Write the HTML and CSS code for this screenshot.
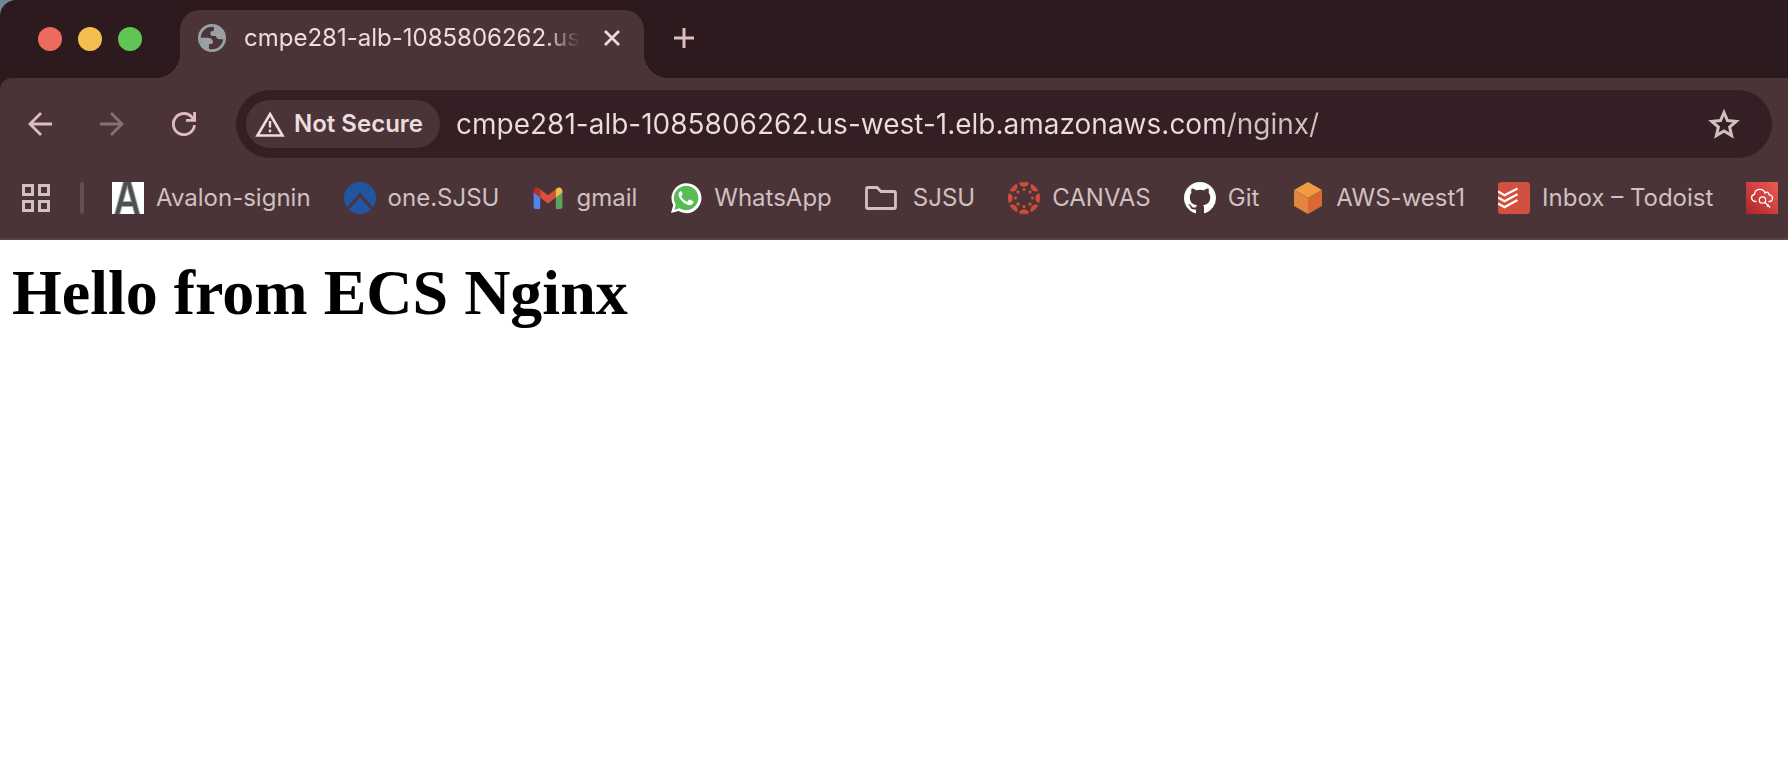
FILE: index.html
```
<!DOCTYPE html>
<html lang="en">
<head>
<meta charset="utf-8">
<meta name="viewport" content="width=device-width, initial-scale=1">
<title>cmpe281-alb-1085806262.us-west-1.elb.amazonaws.com/nginx/</title>
<link rel="stylesheet" href="styles.css">
</head>
<body>
<div class="window">
  <header class="tab-strip">
    <div class="window-controls">
      <button class="light light-close" aria-label="Close window"></button>
      <button class="light light-minimize" aria-label="Minimize window"></button>
      <button class="light light-zoom" aria-label="Zoom window"></button>
    </div>
    <div class="tab">
      <svg class="tab-icon" viewBox="0 0 28 28" aria-hidden="true"><circle cx="14" cy="14" r="14" fill="#9aa0a4"/><circle cx="14" cy="14" r="11.200" fill="#4b3438"/><path d="M2 13.700h7.500c3.500 0 5.500 1.600 5.500 4.300 0 1.500-1 2-2.300 2H11v5.500L5 23zM16 2v3.500c-.3 1.600-1.500 2-3.500 2v2.800c0 1.200.7 1.700 2 1.700h3.200c1 2.500 2 3.200 4.500 3.200h4.300L25 7z" fill="#9aa0a4"/></svg>
      <span class="tab-title">cmpe281-alb-1085806262.us-west-1.elb.amazonaws.com/nginx/</span>
      <button class="tab-close" aria-label="Close tab"><svg viewBox="0 0 16 16" width="16" height="16"><path d="M1 1l14 14M15 1L1 15" stroke="currentColor" stroke-width="2.800"/></svg></button>
    </div>
    <button class="new-tab" aria-label="New tab"><svg viewBox="0 0 20 20" width="20" height="20"><path d="M10 0v20M0 10h20" stroke="currentColor" stroke-width="3"/></svg></button>
  </header>

  <div class="toolbar">
    <nav class="nav-buttons" aria-label="History">
      <button class="nav-button" aria-label="Back"><svg viewBox="0 0 24 24"><path d="M24 12H2M13 1L2 12l11 11" fill="none" stroke="currentColor" stroke-width="2.800"/></svg></button>
      <button class="nav-button nav-disabled" aria-label="Forward"><svg viewBox="0 0 24 24"><path d="M0 12h22M11 1l11 11-11 11" fill="none" stroke="currentColor" stroke-width="2.800"/></svg></button>
      <button class="nav-button" aria-label="Reload"><svg viewBox="0 0 24 24"><path d="M22.500 13.200A10.600 10.600 0 1 1 20.500 5.800L22 8M22.600 0v8.400H14" fill="none" stroke="currentColor" stroke-width="2.800"/></svg></button>
    </nav>
    <div class="address-bar">
      <button class="site-chip"><svg class="chip-icon" viewBox="0 0 30 26" aria-hidden="true"><path d="M15 3L27.500 24.500h-25z" fill="none" stroke="currentColor" stroke-width="2.600"/><path d="M15 10v6.500M15 18.500v2.700" stroke="currentColor" stroke-width="2.400"/></svg>Not Secure</button>
      <input class="url" type="text" aria-label="Address" spellcheck="false" value="cmpe281-alb-1085806262.us-west-1.elb.amazonaws.com/nginx/">
      <button class="bookmark-star" aria-label="Bookmark this page"><svg viewBox="0 0 32 30" width="32" height="30"><path d="M16 3.500l3.500 8 8.700.8-6.600 5.700 2 8.600L16 22l-7.600 4.600 2-8.600-6.600-5.700 8.700-.8z" fill="none" stroke="currentColor" stroke-width="3"/></svg></button>
    </div>
  </div>

  <nav class="bookmarks" aria-label="Bookmarks">
    <button class="apps" aria-label="Apps"><svg viewBox="0 0 28 28" width="28" height="28"><path d="M1.500 1.500h9v9h-9zM17.500 1.500h9v9h-9zM1.500 17.500h9v9h-9zM17.500 17.500h9v9h-9z" fill="none" stroke="currentColor" stroke-width="3"/></svg></button>
    <span class="divider"></span>
    <ul class="bookmark-list">
      <li><a class="bookmark" href="#"><svg class="favicon" viewBox="0 0 32 32" aria-hidden="true"><path d="M0 0h32v32H0z" fill="#fff"/><path d="M5 33L14 0h2.500L25.500 33M8 22h14" fill="none" stroke="#a5a9a9" stroke-width="6"/><path d="M5 33L14 0h2.500L25.500 33M8 22h14" fill="none" stroke="#4b5152" stroke-width="4"/></svg>Avalon-signin</a></li>
      <li><a class="bookmark" href="#"><svg class="favicon" viewBox="0 0 32 32" aria-hidden="true"><circle cx="16" cy="16" r="16" fill="#2155a2"/><path d="M4 26.500L16 13l12 13.500" fill="none" stroke="#4b3438" stroke-width="3"/></svg>one.SJSU</a></li>
      <li><a class="bookmark" href="#"><svg class="favicon" viewBox="0 0 32 32" aria-hidden="true"><path d="M1.600 10v15c0 1.100.9 2 2 2h4.600V14z" fill="#5085ed"/><path d="M23.800 14v13h4.600c1.100 0 2-.9 2-2V10z" fill="#58a55c"/><path d="M8.200 7.200L16 13.200l7.800-6v8.200L16 21.400l-7.800-6z" fill="#d85140"/><path d="M8.200 15.400V7.200C5.500 4 1.600 5.500 1.600 8.800v1.800z" fill="#b33226"/><path d="M23.800 15.400V7.200c2.700-3.200 6.600-1.700 6.600 1.600v1.800z" fill="#f1bd42"/></svg>gmail</a></li>
      <li><a class="bookmark" href="#"><svg class="favicon" viewBox="0 0 32 32" aria-hidden="true"><path d="M1 31l2.200-7.800A15 15 0 1 1 8.700 29z" fill="#fff"/><path d="M4.400 27.700l1.400-5.200A12.200 12.200 0 1 1 9.600 26.300z" fill="#57bd53"/><path d="M11.300 9.200c-.5-.1-1 0-1.400.4-1 1-1.500 2.200-1.300 3.600.4 2.600 2.700 5.500 5.200 7.500 2.300 1.800 5.100 2.900 7.100 2.300 1.600-.5 2.700-1.600 2.600-3.200 0-.4-.3-.6-.7-.8l-3-1.400c-.5-.2-.8-.1-1.100.3l-1.200 1.500c-.3.300-.6.300-1 .1-2.300-1-4-2.600-5.100-4.700-.2-.4-.1-.7.200-1l.9-1.200c.2-.3.200-.5.100-.9l-1.300-2.500z" fill="#fff"/></svg>WhatsApp</a></li>
      <li><a class="bookmark bookmark-folder" href="#"><svg class="favicon" viewBox="0 0 32 32" aria-hidden="true"><path d="M1.500 7q0-1.500 1.500-1.500h9l4 4h13q1.500 0 1.500 1.500v14q0 1.500-1.500 1.500H3q-1.500 0-1.500-1.500z" fill="none" stroke="#cfc0c2" stroke-width="2.800"/></svg>SJSU</a></li>
      <li><a class="bookmark" href="#"><svg class="favicon" viewBox="0 0 32 32" aria-hidden="true"><defs><clipPath id="disc"><circle cx="16" cy="16" r="16"/></clipPath><g id="petal"><circle cx="16" cy="-.5" r="5.200"/><circle cx="16" cy="7.500" r="1.600"/></g></defs><g fill="#d14c38" clip-path="url(#disc)"><use href="#petal"/><use href="#petal" transform="rotate(45 16 16)"/><use href="#petal" transform="rotate(90 16 16)"/><use href="#petal" transform="rotate(135 16 16)"/><use href="#petal" transform="rotate(180 16 16)"/><use href="#petal" transform="rotate(225 16 16)"/><use href="#petal" transform="rotate(270 16 16)"/><use href="#petal" transform="rotate(315 16 16)"/></g></svg>CANVAS</a></li>
      <li><a class="bookmark" href="#"><svg class="favicon" viewBox="0 0 16 16" aria-hidden="true"><path fill="#fff" d="M8 0C3.580 0 0 3.580 0 8c0 3.540 2.290 6.530 5.470 7.590.4.070.55-.17.55-.38 0-.19-.01-.82-.01-1.490-2.010.37-2.530-.49-2.690-.94-.09-.23-.48-.94-.82-1.130-.28-.15-.68-.52-.01-.53.63-.01 1.080.58 1.230.82.72 1.210 1.870.87 2.330.66.070-.52.28-.87.51-1.070-1.780-.2-3.640-.89-3.640-3.950 0-.87.31-1.590.82-2.150-.08-.2-.36-1.020.08-2.120 0 0 .67-.21 2.200.82.64-.18 1.320-.27 2-.27s1.360.09 2 .27c1.530-1.040 2.200-.82 2.200-.82.44 1.100.16 1.920.08 2.120.51.56.82 1.270.82 2.150 0 3.070-1.870 3.750-3.650 3.950.29.25.54.73.54 1.480 0 1.070-.01 1.930-.01 2.200 0 .21.15.46.55.38A8.010 8.010 0 0 0 16 8c0-4.420-3.580-8-8-8z"/></svg>Git</a></li>
      <li><a class="bookmark" href="#"><svg class="favicon" viewBox="0 0 32 32" aria-hidden="true"><path d="M16 0l14 8-14 8L2 8z" fill="#ee9b42"/><path d="M2 8l14 8v16L2 24z" fill="#e4833b"/><path d="M30 8l-14 8v16l14-8z" fill="#da6832"/></svg>AWS-west1</a></li>
      <li><a class="bookmark" href="#"><svg class="favicon" viewBox="0 0 32 32" aria-hidden="true"><rect width="32" height="32" rx="3.500" fill="#d1503e"/><path d="M0 9.500l6.500 3.700L19.500 6.500M0 15.500l6.500 3.700 13-7M0 21.500l6.500 3.700 13-7.200" fill="none" stroke="#fff" stroke-width="2.300"/></svg>Inbox – Todoist</a></li>
      <li><a class="bookmark" href="#" aria-label="Cloud search"><svg class="favicon" viewBox="0 0 32 32" aria-hidden="true"><defs><linearGradient id="red" x1="0" y1="1" x2="1" y2="0"><stop stop-color="#ad2325"/><stop offset="1" stop-color="#ee5e58"/></linearGradient></defs><path d="M0 0h32v32H0z" fill="url(#red)"/><g fill="none" stroke="#fff" stroke-width="1.300"><path d="M10.500 19.500H9C4.500 18.500 4.500 13 8.500 12.300 9 6.500 17 5.500 19 11c1.500-1.500 4-.8 4 1.700 4.500.5 4.500 6.300 1 6.800h-1.500"/><circle cx="16.500" cy="18" r="3.200"/><path d="M18.700 20.200l5.500 5.300M21 24.500l1.800-1.700"/></g></svg></a></li>
    </ul>
  </nav>

  <main class="page">
    <h1 class="page-title">Hello from ECS Nginx</h1>
  </main>
</div>
</body>
</html>
```
FILE: styles.css
```
* { box-sizing: border-box; }

body {
  margin: 0;
  background: #6f8794;
  font-family: Inter, "Liberation Sans", sans-serif;
  font-size: 24px;
  line-height: 32px;
}

button {
  display: flex;
  align-items: center;
  justify-content: center;
  padding: 0;
  border: 0;
  background: none;
  color: inherit;
  font: inherit;
}

svg { display: block; flex: none; }

.window {
  display: flex;
  flex-direction: column;
  min-height: 100vh;
  overflow: hidden;
  border-radius: 16px 0 0 0;
  background: #2d1a1e;
}

.tab-strip {
  display: flex;
  align-items: flex-end;
  padding: 10px 0 0 38px;
  color: #ebdcde;
}

.window-controls {
  display: flex;
  align-self: center;
  gap: 16px;
  padding-bottom: 10px;
}

.light { width: 24px; height: 24px; border-radius: 50%; }
.light-close { background: #ed6a5e; }
.light-minimize { background: #f5bf4f; }
.light-zoom { background: #61c554; }

.tab {
  position: relative;
  display: flex;
  align-items: center;
  width: 464px;
  margin-left: 38px;
  padding: 12px 24px 24px 18px;
  border-radius: 20px 20px 0 0;
  background: #4b3438;
}

.tab::before,
.tab::after {
  content: "";
  position: absolute;
  bottom: 0;
  width: 24px;
  height: 24px;
}

.tab::before {
  right: 100%;
  background: radial-gradient(circle at 0 0, transparent 24px, #4b3438 24px);
}

.tab::after {
  left: 100%;
  background: radial-gradient(circle at 100% 0, transparent 24px, #4b3438 24px);
}

.tab-icon { width: 28px; height: 28px; }

.tab-title {
  flex: 1;
  min-width: 0;
  margin: 0 24px 0 18px;
  overflow: hidden;
  white-space: nowrap;
  -webkit-mask-image: linear-gradient(to left, transparent, #000 36px);
  mask-image: linear-gradient(to left, transparent, #000 36px);
}

.tab-close { width: 16px; height: 32px; }

.new-tab {
  align-self: center;
  width: 20px;
  height: 32px;
  margin: 0 0 12px 30px;
  color: #dfbcc3;
}

.toolbar {
  display: flex;
  align-items: center;
  padding: 12px 16px 12px 28px;
  border-top-left-radius: 12px;
  background: #4b3438;
}

.nav-buttons { display: flex; gap: 48px; margin-right: 40px; }
.nav-button { width: 24px; height: 24px; color: #dfbcc3; }
.nav-button svg { width: 24px; height: 24px; }
.nav-disabled { color: #8a6f74; }

.address-bar {
  flex: 1;
  display: flex;
  align-items: center;
  min-width: 0;
  padding: 10px 32px 10px 10px;
  border-radius: 34px;
  background: #341f24;
  color: #ebdcde;
}

.site-chip {
  gap: 9px;
  padding: 8px 17px 8px 9px;
  border-radius: 24px;
  background: #4b3438;
  font-weight: 600;
  white-space: nowrap;
}

.chip-icon { width: 30px; height: 26px; }

.url {
  flex: 1;
  min-width: 0;
  height: 48px;
  margin-left: 16px;
  padding: 0;
  border: 0;
  outline: 0;
  background: linear-gradient(to right, #ebdcde 772px, #cfc0c2 772px);
  -webkit-background-clip: text;
  background-clip: text;
  color: transparent;
  font: inherit;
  font-size: 28px;
}

.bookmark-star { color: #cfc0c2; }

.bookmarks {
  display: flex;
  align-items: center;
  padding: 12px 0 24px 22px;
  border-bottom: 2px solid #54474a;
  background: #4b3438;
  color: #cfc0c2;
}

.divider {
  width: 4px;
  height: 32px;
  margin: 0 28px 0 30px;
  border-radius: 2px;
  background: #664d51;
}

.bookmark-list {
  display: flex;
  gap: 33px;
  margin: 0;
  padding: 0;
  list-style: none;
}

.bookmark {
  display: flex;
  align-items: center;
  gap: 12px;
  color: inherit;
  text-decoration: none;
  white-space: nowrap;
}

.bookmark-folder { gap: 16px; }
.favicon { width: 32px; height: 32px; }

.page {
  flex: 1;
  padding: 16px 12px;
  background: #fff;
  color: #000;
}

.page-title {
  margin: 0;
  font: bold 64px/74px "Liberation Serif", "Times New Roman", serif;
}
```
